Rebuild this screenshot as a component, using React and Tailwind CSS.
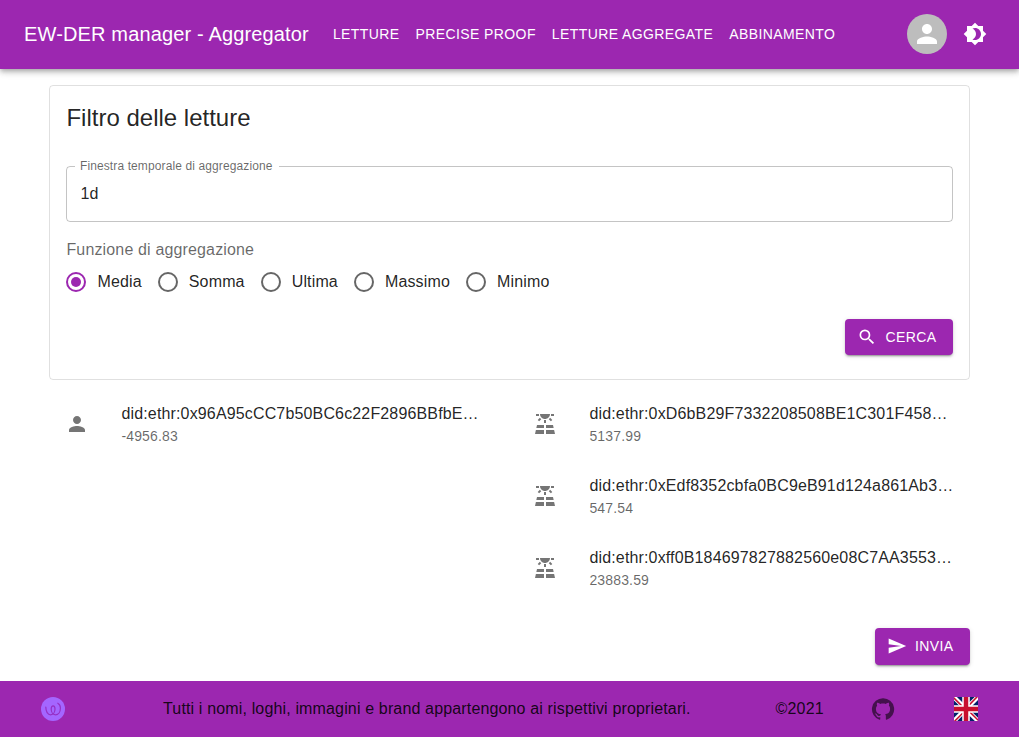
import { MdPerson, MdSearch, MdSend } from "react-icons/md";

const navItems = ["Letture", "Precise Proof", "Letture aggregate", "Abbinamento"];
const functions = ["Media", "Somma", "Ultima", "Massimo", "Minimo"];
const consumers = [{ id: "did:ethr:0x96A95cCC7b50BC6c22F2896BBfbE…", value: "-4956.83" }];
const producers = [
  { id: "did:ethr:0xD6bB29F7332208508BE1C301F458…", value: "5137.99" },
  { id: "did:ethr:0xEdf8352cbfa0BC9eB91d124a861Ab3…", value: "547.54" },
  { id: "did:ethr:0xff0B184697827882560e08C7AA3553…", value: "23883.59" },
];

function BrightnessIcon() {
  return (
    <svg viewBox="0 0 24 24" className="size-6" fill="currentColor">
      <path d="M20 8.69V4h-4.69L12 .69 8.69 4H4v4.69L.69 12 4 15.31V20h4.69L12 23.31 15.31 20H20v-4.69L23.31 12 20 8.69zM12 18c-.89 0-1.74-.2-2.5-.55C11.56 16.5 13 14.42 13 12s-1.44-4.5-3.5-5.45C10.26 6.2 11.11 6 12 6c3.31 0 6 2.69 6 6s-2.69 6-6 6z" />
    </svg>
  );
}

function SolarIcon() {
  return (
    <svg viewBox="0 0 24 24" className="size-6" fill="currentColor">
      <path d="M3.33 16H11v-3H4zM13 16h7.67L20 13h-7zm8.11 2H13v4h9zM2 22h9v-4H2.89zM11 8h2v3h-2zm4.764-.795 1.415-1.414 2.12 2.12-1.413 1.415zM4.716 7.905l2.121-2.121 1.415 1.414-2.122 2.122zM3 2h3v2H3zm15 0h3v2h-3zm-6 5c2.76 0 5-2.24 5-5H7c0 2.76 2.24 5 5 5z" />
    </svg>
  );
}

function GitHubIcon() {
  return (
    <svg viewBox="0 0 24 24" className="size-6" fill="currentColor">
      <path d="M12 1.27a11 11 0 00-3.48 21.46c.55.09.73-.28.73-.55v-1.84c-3.03.64-3.67-1.46-3.67-1.46-.55-1.29-1.28-1.65-1.28-1.65-.92-.65.1-.65.1-.65 1.1 0 1.73 1.1 1.73 1.1.92 1.65 2.57 1.2 3.21.92a2 2 0 01.64-1.47c-2.47-.27-5.04-1.19-5.04-5.5 0-1.1.46-2.1 1.2-2.84a3.76 3.76 0 010-2.93s.91-.28 3.11 1.1c1.8-.49 3.7-.49 5.5 0 2.1-1.38 3.02-1.1 3.02-1.1a3.76 3.76 0 01.1 2.93c.83.74 1.2 1.74 1.2 2.94 0 4.21-2.57 5.13-5.04 5.4.45.37.82.92.82 2.02v3.03c0 .27.1.64.73.55A11 11 0 0012 1.27" />
    </svg>
  );
}

function Logo() {
  return (
    <svg viewBox="0 0 24 24" className="size-6" fill="none">
      <circle cx="12" cy="12" r="12" fill="#a466ff" />
      <path
        d="M4.8 10C4.8 14.6 6.8 17.8 9.6 17.8 12.4 17.8 14 15 14 12 14 10 13.2 8.8 12.1 8.8S10.2 10 10.2 12C10.2 15 11.8 17.8 14.4 17.8 17.4 17.8 19.4 14.8 19.4 11 19.4 8.8 18.4 7 16.8 6.2"
        stroke="#9630c4"
        strokeWidth="1.2"
        strokeLinecap="round"
      />
    </svg>
  );
}

function Flag() {
  return (
    <svg viewBox="0 0 512 512" className="size-6">
      <path fill="#012169" d="M0 0h512v512H0z" />
      <path fill="#FFF" d="M512 0v64L322 256l190 187v69h-67L254 324 68 512H0v-68l186-187L0 74V0h62l192 188L440 0z" />
      <path fill="#C8102E" d="m184 324 11 34L42 512H0v-3zm124-12 54 8 150 147v45zM512 0 320 196l-4-44L466 0zM0 1l193 189-59-8L0 49z" />
      <path fill="#FFF" d="M176 0v512h160V0zM0 176v160h512V176z" />
      <path fill="#C8102E" d="M0 208v96h512v-96zM208 0v512h96V0z" />
    </svg>
  );
}

function Button({ icon, children }) {
  return (
    <button className="flex h-[36.5px] items-center rounded bg-[#9c27b0] px-4 text-sm tracking-[0.02857em] text-white uppercase shadow-[0_3px_1px_-2px_rgba(0,0,0,0.2),0_2px_2px_0_rgba(0,0,0,0.14),0_1px_5px_0_rgba(0,0,0,0.12)]">
      <span className="mr-[8.1px] -ml-1 text-xl">{icon}</span>
      {children}
    </button>
  );
}

function Radio({ label, checked }) {
  return (
    <label className="flex h-[42px] items-center gap-[11px]">
      <span
        className={
          checked
            ? "flex size-5 items-center justify-center rounded-full border-2 border-[#9c27b0]"
            : "size-5 rounded-full border-2 border-black/60"
        }
      >
        {checked && <span className="size-2.5 rounded-full bg-[#9c27b0]" />}
      </span>
      <span className="tracking-[0.00938em]">{label}</span>
    </label>
  );
}

function Reading({ icon, id, value }) {
  return (
    <li className="flex h-18 items-center px-4">
      <span className="w-14 shrink-0 text-2xl text-black/54">{icon}</span>
      <div className="min-w-0">
        <p className="truncate leading-6 tracking-[0.00938em]">{id}</p>
        <p className="text-sm leading-5 tracking-[0.01071em] text-black/60">{value}</p>
      </div>
    </li>
  );
}

export default function App() {
  return (
    <div className="flex h-[737px] flex-col bg-white font-['Liberation_Sans',Arial,sans-serif] text-base text-black/87">
      <header className="flex h-[68.5px] shrink-0 items-center bg-[#9c27b0] px-6 text-white shadow-[0_2px_4px_-1px_rgba(0,0,0,0.2),0_4px_5px_0_rgba(0,0,0,0.14),0_1px_10px_0_rgba(0,0,0,0.12)]">
        <h1 className="mr-4 text-xl leading-8 tracking-[0.0075em]">EW-DER manager - Aggregator</h1>
        <nav className="flex flex-1">
          {navItems.map((item) => (
            <a key={item} className="px-2 text-sm tracking-[0.02857em] uppercase">
              {item}
            </a>
          ))}
        </nav>
        <div className="flex items-center gap-2">
          <span className="flex size-10 items-center justify-center rounded-full bg-[#bdbdbd]">
            <MdPerson className="size-[30px]" />
          </span>
          <span className="flex size-10 items-center justify-center">
            <BrightnessIcon />
          </span>
        </div>
      </header>

      <main className="flex flex-1 flex-col px-[49.45px] pt-4">
        <section className="h-[295px] rounded border border-black/12 p-4">
          <h2 className="text-2xl leading-8">Filtro delle letture</h2>
          <fieldset className="mt-[26.5px] h-[61.5px] rounded border border-black/23 pl-2">
            <legend className="h-3 pr-1.5 pl-[4.5px] text-xs leading-3 tracking-[0.00938em] text-black/60">
              Finestra temporale di aggregazione
            </legend>
            <p className="mt-[9.5px] pl-[5px] leading-6 tracking-[0.00938em]">1d</p>
          </fieldset>
          <p className="mt-4 leading-[23px] tracking-[0.00938em] text-black/60">Funzione di aggregazione</p>
          <div className="flex gap-4">
            {functions.map((name, i) => (
              <Radio key={name} label={name} checked={i === 0} />
            ))}
          </div>
          <div className="mt-4 flex justify-end">
            <Button icon={<MdSearch />}>Cerca</Button>
          </div>
        </section>

        <div className="mt-2 grid grid-cols-2 gap-[15.9px]">
          <ul>
            {consumers.map((c) => (
              <Reading key={c.id} icon={<MdPerson />} {...c} />
            ))}
          </ul>
          <ul>
            {producers.map((p) => (
              <Reading key={p.id} icon={<SolarIcon />} {...p} />
            ))}
          </ul>
        </div>
        <div className="mt-[24.5px] flex justify-end">
          <Button icon={<MdSend />}>Invia</Button>
        </div>
      </main>

      <footer className="flex h-14 shrink-0 items-center bg-[#9c27b0] px-[41px]">
        <Logo />
        <p className="ml-[98px] w-[612.6px] tracking-[0.00938em]">
          Tutti i nomi, loghi, immagini e brand appartengono ai rispettivi proprietari.
        </p>
        <p className="tracking-[0.00938em]">©2021</p>
        <span className="ml-auto text-black/56">
          <GitHubIcon />
        </span>
        <span className="ml-[59px]">
          <Flag />
        </span>
      </footer>
    </div>
  );
}
